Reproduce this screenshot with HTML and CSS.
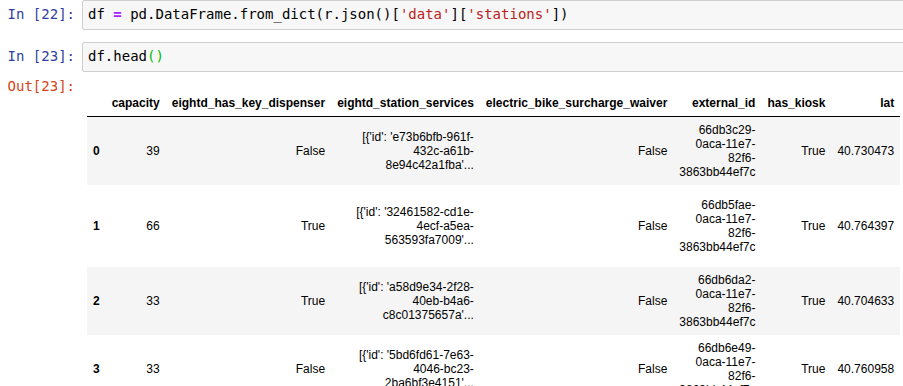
FILE: index.html
```html
<!DOCTYPE html>
<html lang="en">
<head>
<meta charset="utf-8">
<title>Notebook</title>
<link rel="stylesheet" href="styles.css">
</head>
<body>
<div class="notebook">
  <div class="cell code-cell">
    <div class="prompt in-prompt">In [22]:</div>
    <div class="input">df <span class="cm-op">=</span> pd.DataFrame.from_dict(r.json()[<span class="cm-str">'data'</span>][<span class="cm-str">'stations'</span>])</div>
  </div>
  <div class="cell code-cell">
    <div class="prompt in-prompt">In [23]:</div>
    <div class="input">df.head<span class="cm-match">()</span></div>
  </div>
  <div class="cell out-cell">
    <div class="prompt out-prompt">Out[23]:</div>
    <div class="output">
      <table class="dataframe">
        <thead>
          <tr>
            <th></th>
            <th>capacity</th>
            <th>eightd_has_key_dispenser</th>
            <th>eightd_station_services</th>
            <th>electric_bike_surcharge_waiver</th>
            <th>external_id</th>
            <th>has_kiosk</th>
            <th>lat</th>
          </tr>
        </thead>
        <tbody>
          <tr>
            <th>0</th>
            <td>39</td>
            <td>False</td>
            <td>[{'id': 'e73b6bfb-<wbr>961f-<wbr>432c-<wbr>a61b-<wbr>8e94c42a1fba'...</td>
            <td>False</td>
            <td>66db3c29-<wbr>0aca-<wbr>11e7-<wbr>82f6-<wbr>3863bb44ef7c</td>
            <td>True</td>
            <td>40.730473</td>
          </tr>
          <tr class="tall">
            <th>1</th>
            <td>66</td>
            <td>True</td>
            <td>[{'id': '32461582-<wbr>cd1e-<wbr>4ecf-<wbr>a5ea-<wbr>563593fa7009'...</td>
            <td>False</td>
            <td>66db5fae-<wbr>0aca-<wbr>11e7-<wbr>82f6-<wbr>3863bb44ef7c</td>
            <td>True</td>
            <td>40.764397</td>
          </tr>
          <tr>
            <th>2</th>
            <td>33</td>
            <td>True</td>
            <td>[{'id': 'a58d9e34-<wbr>2f28-<wbr>40eb-<wbr>b4a6-<wbr>c8c01375657a'...</td>
            <td>False</td>
            <td>66db6da2-<wbr>0aca-<wbr>11e7-<wbr>82f6-<wbr>3863bb44ef7c</td>
            <td>True</td>
            <td>40.704633</td>
          </tr>
          <tr>
            <th>3</th>
            <td>33</td>
            <td>False</td>
            <td>[{'id': '5bd6fd61-<wbr>7e63-<wbr>4046-<wbr>bc23-<wbr>2ba6bf3e4151'...</td>
            <td>False</td>
            <td>66db6e49-<wbr>0aca-<wbr>11e7-<wbr>82f6-<wbr>3863bb44ef7c</td>
            <td>True</td>
            <td>40.760958</td>
          </tr>
        </tbody>
      </table>
    </div>
  </div>
</div>
</body>
</html>
```

FILE: styles.css
```css
html, body {
  margin: 0;
  padding: 0;
  background: #ffffff;
  overflow: hidden;
}

body {
  width: 903px;
  height: 386px;
}

.notebook {
  width: 903px;
}

.cell {
  display: flex;
  align-items: flex-start;
}

.code-cell + .code-cell {
  margin-top: 12px;
}

.out-cell {
  margin-top: 6px;
}

.prompt {
  flex: 0 0 82px;
  box-sizing: border-box;
  padding-right: 7px;
  text-align: right;
  font-family: "DejaVu Sans Mono", monospace;
  font-size: 14px;
  line-height: 17px;
  white-space: pre;
}

.in-prompt {
  color: #303F9F;
  padding-top: 6px;
}

.out-prompt {
  color: #D84315;
}

.input {
  flex: 0 0 900px;
  border: 1px solid #cfcfcf;
  border-radius: 2px;
  background: #f7f7f7;
  padding: 5px 5px 6px 5px;
  font-family: "DejaVu Sans Mono", monospace;
  font-size: 14px;
  line-height: 17px;
  color: #000000;
  white-space: pre;
}

.cm-op {
  color: #AA22FF;
  font-weight: bold;
}

.cm-str {
  color: #BA2121;
}

.cm-match {
  color: #00bb00;
}

.output {
  flex: 1 1 auto;
  min-width: 0;
  padding-left: 5px;
  padding-top: 12px;
}

.dataframe {
  width: min-content;
  border-collapse: collapse;
  border-spacing: 0;
  border: none;
  font-family: "Liberation Sans", Arial, Helvetica, sans-serif;
  font-size: 12px;
  color: #000000;
}

.dataframe th,
.dataframe td {
  padding: 6px;
  text-align: right;
  vertical-align: middle;
  line-height: 14px;
  white-space: normal;
  border: none;
}

.dataframe thead th {
  font-weight: bold;
  border-bottom: 1px solid #000000;
}

.dataframe tbody th {
  font-weight: bold;
}

.dataframe tbody tr:nth-child(odd) {
  background: #f5f5f5;
}

.dataframe tr.tall {
  height: 82px;
}
```
